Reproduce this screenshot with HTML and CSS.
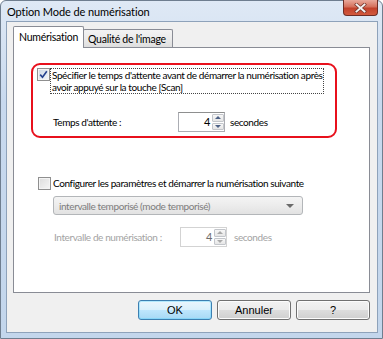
FILE: index.html
```html
<!DOCTYPE html>
<html lang="fr">
<head>
    <meta charset="UTF-8">
    <meta name="viewport" content="width=device-width, initial-scale=1.0">
    <title>Option Mode de numérisation</title>
    <link rel="stylesheet" href="styles.css">
</head>
<body>
    <div class="window">
        <div class="titlebar">
            <span class="title">Option Mode de numérisation</span>
            <button class="close-btn" title="Fermer">
                <svg width="13" height="10" viewBox="0 0 13 10">
                    <path d="M2.5 1.5 L10.5 8.5 M10.5 1.5 L2.5 8.5" stroke="#7a3a30" stroke-width="3.4" stroke-linecap="square"/>
                    <path d="M2.5 1.5 L10.5 8.5 M10.5 1.5 L2.5 8.5" stroke="#f4f4f4" stroke-width="1.9" stroke-linecap="square"/>
                </svg>
            </button>
        </div>

        <div class="client">
            <div class="tabs">
                <div class="tab active">Numérisation</div>
                <div class="tab">Qualité de l'image</div>
            </div>

            <div class="panel">
                <div class="highlight">
                    <div class="check-row">
                        <span class="checkbox checked">
                            <svg width="9" height="9" viewBox="0 0 9 9">
                                <path d="M1.2 4.6 L3.5 7.2 L7.8 1.2" fill="none" stroke="#23408e" stroke-width="1.6"/>
                            </svg>
                        </span>
                        <span class="check-label focus">Spécifier le temps d'attente avant de démarrer la numérisation après<br>avoir appuyé sur la touche [Scan]</span>
                    </div>
                    <div class="field-row wait-row">
                        <span class="field-label">Temps d'attente :</span>
                        <div class="spin">
                            <span class="spin-value">4</span>
                            <span class="spin-arrows">
                                <span class="spin-btn up"></span>
                                <span class="spin-btn down"></span>
                            </span>
                        </div>
                        <span class="unit">secondes</span>
                    </div>
                </div>

                <div class="check-row next-row">
                    <span class="checkbox"></span>
                    <span class="check-label">Configurer les paramètres et démarrer la numérisation suivante</span>
                </div>

                <div class="select disabled">
                    <span>intervalle temporisé (mode temporisé)</span>
                    <span class="caret"></span>
                </div>

                <div class="field-row interval-row disabled">
                    <span class="field-label">Intervalle de numérisation :</span>
                    <div class="spin">
                        <span class="spin-value">4</span>
                        <span class="spin-arrows">
                            <span class="spin-btn up"></span>
                            <span class="spin-btn down"></span>
                        </span>
                    </div>
                    <span class="unit">secondes</span>
                </div>
            </div>

            <div class="buttons">
                <button class="btn default">OK</button>
                <button class="btn">Annuler</button>
                <button class="btn">?</button>
            </div>
        </div>
    </div>
</body>
</html>
```

FILE: styles.css
```css
body {
    margin: 0;
    padding: 0;
    background-color: #fff;
    font-family: Lato, "Liberation Sans", sans-serif;
}

.window {
    width: 383px;
    height: 339px;
    box-sizing: border-box;
    border: 1px solid #6f7e8f;
    border-radius: 6px 6px 0 0;
    background: linear-gradient(#dfe9f5, #c8d9ee 30%, #c3d6ec);
    display: flex;
    flex-direction: column;
}

.titlebar {
    height: 20px;
    display: flex;
    align-items: center;
    padding-left: 6px;
}

.title {
    font-size: 11px;
    letter-spacing: -0.1px;
    color: #000;
}

.close-btn {
    margin-left: auto;
    margin-right: 4px;
    align-self: flex-start;
    margin-top: -1px;
    width: 35px;
    height: 16px;
    padding: 0;
    border: 1px solid #6e2d25;
    border-top: none;
    border-radius: 0 0 4px 4px;
    background: linear-gradient(#e9a99b, #d5705c 45%, #c2412b 55%, #d25a3e);
    display: flex;
    align-items: center;
    justify-content: center;
}

.client {
    flex: 1;
    margin: 0 4px 5px 5px;
    border: 1px solid #8ea2ba;
    background: #f0f0f0;
    padding: 4px 7px 12px 6px;
    display: flex;
    flex-direction: column;
}

/* tabs */
.tabs {
    display: flex;
    align-items: flex-end;
    height: 21px;
}

.tab {
    box-sizing: border-box;
    border: 1px solid #898c95;
    border-bottom: none;
    border-radius: 2px 2px 0 0;
    font-size: 10.5px;
    letter-spacing: -0.25px;
    color: #000;
    white-space: nowrap;
}

.tab.active {
    position: relative;
    z-index: 1;
    width: 71px;
    height: 22px;
    margin-bottom: -1px;
    padding: 4px 0 0 5px;
    background: #fff;
}

.tab:not(.active) {
    width: 90px;
    height: 18px;
    margin-left: -1px;
    padding: 3px 0 0 4px;
    background: linear-gradient(#f3f3f3, #ebebeb 50%, #dedede);
}

.panel {
    height: 246px;
    box-sizing: border-box;
    border: 1px solid #898c95;
    background: #fff;
    padding: 15px 0 0 17px;
    font-size: 10px;
    letter-spacing: -0.4px;
}

/* red highlight */
.highlight {
    width: 306px;
    height: 75px;
    box-sizing: border-box;
    border: 2px solid #e8101c;
    border-radius: 9px;
    padding-top: 3px;
}

.check-row {
    display: flex;
    align-items: flex-start;
}

.highlight .check-row {
    margin-left: 4px;
}

.checkbox {
    width: 13px;
    height: 13px;
    box-sizing: border-box;
    border: 1px solid #8f8f8f;
    background: linear-gradient(135deg, #dcdcdc, #f6f6f6);
    box-shadow: inset 0 0 0 1px #f4f4f4;
    display: flex;
    align-items: center;
    justify-content: center;
    flex-shrink: 0;
}

.checkbox.checked {
    background: linear-gradient(135deg, #cdd8e6, #f2f6fb);
}

.check-label {
    line-height: 12px;
    padding: 0 1px;
    border: 1px solid transparent;
    white-space: nowrap;
}

.check-label.focus {
    border: 1px dotted #444;
    width: 274px;
    box-sizing: border-box;
}

.field-row {
    display: flex;
    align-items: center;
    white-space: nowrap;
}

.field-row .field-label {
    width: 125px;
    flex-shrink: 0;
}

.wait-row {
    margin: 18px 0 0 20px;
}

.spin {
    width: 47px;
    height: 20px;
    box-sizing: border-box;
    border: 1px solid #abadb3;
    border-top-color: #8e8f8f;
    background: #fff;
    display: flex;
    font-size: 11px;
}

.spin-value {
    flex: 1;
    text-align: right;
    padding-right: 2px;
    line-height: 18px;
}

.spin-arrows {
    width: 12px;
    display: flex;
    flex-direction: column;
    gap: 1px;
    padding: 1px 0;
}

.spin-btn {
    flex: 1;
    border: 1px solid #c3c6cb;
    border-radius: 1px;
    background: linear-gradient(#f7f7f7, #e6e6e6);
    display: flex;
    align-items: center;
    justify-content: center;
}

.spin-btn::after {
    content: "";
    border-left: 3px solid transparent;
    border-right: 3px solid transparent;
}

.spin-btn.up::after {
    border-bottom: 3px solid #4d6185;
}

.spin-btn.down::after {
    border-top: 3px solid #4d6185;
}

.unit {
    margin-left: 5px;
}

/* second option */
.next-row {
    margin: 38px 0 0 7px;
    align-items: center;
}

.select {
    width: 250px;
    height: 19px;
    box-sizing: border-box;
    margin: 6px 0 0 22px;
    padding: 0 8px 0 5px;
    border: 1px solid #b3b6b9;
    border-radius: 3px;
    background: linear-gradient(#f4f4f4, #ececec 50%, #e2e2e2);
    display: flex;
    align-items: center;
    justify-content: space-between;
}

.select.disabled {
    color: #7d7d7d;
}

.caret {
    border-left: 4px solid transparent;
    border-right: 4px solid transparent;
    border-top: 4px solid #6a6a6a;
}

.interval-row {
    margin: 12px 0 0 23px;
}

.interval-row .field-label {
    width: 126px;
}

.interval-row .unit {
    margin-left: 7px;
}

.field-row.disabled {
    color: #a3a3a3;
}

.field-row.disabled .spin {
    border-color: #d3d3d3;
}

.field-row.disabled .spin-value {
    color: #6d6d6d;
}

.field-row.disabled .spin-btn::after {
    border-bottom-color: #a9a9a9;
    border-top-color: #a9a9a9;
}

.field-row.disabled .spin-btn.up::after {
    border-top-color: transparent;
}

.field-row.disabled .spin-btn.down::after {
    border-bottom-color: transparent;
}

/* buttons */
.buttons {
    display: flex;
    justify-content: flex-end;
    gap: 5px;
    margin-top: 7px;
}

.btn {
    width: 74px;
    height: 20px;
    padding: 0;
    border: 1px solid #707070;
    border-radius: 3px;
    background: linear-gradient(#f2f2f2, #ebebeb 50%, #dddddd 51%, #cfcfcf);
    box-shadow: inset 0 0 0 1px #fcfcfc;
    font-family: "Liberation Sans", Arial, sans-serif;
    font-size: 11px;
    color: #000;
}

.btn.default {
    border-color: #3c7fb1;
    background: linear-gradient(#eaf6fd, #d9f0fc 50%, #bee6fd 51%, #a7d9f5);
    box-shadow: inset 0 0 0 1px #48d0ff55;
}
```
